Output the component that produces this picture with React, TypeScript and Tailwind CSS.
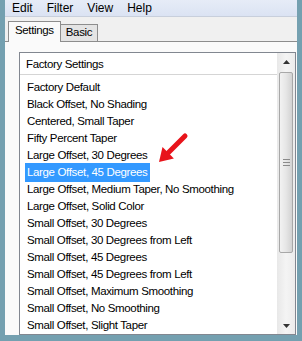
import React from "react";

const items = [
  "Factory Default",
  "Black Offset, No Shading",
  "Centered, Small Taper",
  "Fifty Percent Taper",
  "Large Offset, 30 Degrees",
  "Large Offset, 45 Degrees",
  "Large Offset, Medium Taper, No Smoothing",
  "Large Offset, Solid Color",
  "Small Offset, 30 Degrees",
  "Small Offset, 30 Degrees from Left",
  "Small Offset, 45 Degrees",
  "Small Offset, 45 Degrees from Left",
  "Small Offset, Maximum Smoothing",
  "Small Offset, No Smoothing",
  "Small Offset, Slight Taper",
];

const ScrollBar = () => (
  <div className="flex w-[18px] shrink-0 flex-col bg-gradient-to-r from-[#e8e8e8] via-[#f4f4f4] to-[#ececec]">
    <div className="flex h-[17px] items-center justify-center">
      <svg width="7" height="4" viewBox="0 0 7 4">
        <polygon points="3.5,0 7,4 0,4" fill="#333" />
      </svg>
    </div>
    <div className="mx-[2px] mt-[2px] flex h-[181px] items-center justify-center rounded-[2px] border border-[#a8a8a8] bg-gradient-to-r from-[#f2f2f2] via-[#e6e6e6] to-[#d2d2d2]">
      <div className="flex flex-col gap-[2px]">
        <div className="h-px w-[7px] bg-[#8a8a8a]" />
        <div className="h-px w-[7px] bg-[#8a8a8a]" />
        <div className="h-px w-[7px] bg-[#8a8a8a]" />
      </div>
    </div>
    <div className="flex-1" />
    <div className="flex h-[17px] items-center justify-center">
      <svg width="7" height="4" viewBox="0 0 7 4">
        <polygon points="0,0 7,0 3.5,4" fill="#333" />
      </svg>
    </div>
  </div>
);

export default function App() {
  return (
    <div
      className="relative flex h-[341px] w-[302px] flex-col border-x-[5px] border-b-[6px] border-[#74a0b0] text-[11.5px] tracking-[-0.35px] text-black"
      style={{ fontFamily: '"Liberation Sans", Arial, sans-serif' }}
    >
      {/* menu bar */}
      <div className="flex h-[17px] items-center gap-[14px] border-b border-[#c8cfdc] bg-gradient-to-b from-[#e6ecf7] to-[#dbe3f3] pl-[7px] text-[12px] leading-none tracking-normal">
        <span>Edit</span>
        <span>Filter</span>
        <span>View</span>
        <span>Help</span>
      </div>

      {/* tabs */}
      <div className="flex flex-1 flex-col bg-[#f0f0f0]">
        <div className="flex h-[24px] items-end pl-[3px]">
          <div className="relative z-10 -mb-px flex h-[21px] items-center border border-b-0 border-[#8d8d8d] bg-[#fafafa] px-[6px] pb-[2px]">
            Settings
          </div>
          <div className="flex h-[17px] items-center border border-l-0 border-b-0 border-[#8d8d8d] bg-[#e4e4e4] px-[5px]">
            Basic
          </div>
        </div>

        <div className="flex flex-1 flex-col border-t border-[#8d8d8d] bg-[#fafafa] pl-[14px] pr-[1px] pt-[10px]">
          {/* list box */}
          <div className="flex h-[283px] border border-[#828790] bg-white">
            <div className="flex flex-1 flex-col overflow-hidden">
              <div className="flex h-[22px] shrink-0 items-center border-b border-[#d5d5d5] pl-[6px] pt-[3px]">
                Factory Settings
              </div>
              <div className="flex flex-col pt-[4px]">
                {items.map((item) => (
                  <div key={item} className="flex h-[17px] shrink-0 items-center pl-[5px]">
                    <span
                      className={
                        item === "Large Offset, 45 Degrees"
                          ? "bg-[#3399ff] px-[2px] py-[1px] text-white"
                          : "px-[2px] py-[1px]"
                      }
                    >
                      {item}
                    </span>
                  </div>
                ))}
              </div>
            </div>
            <ScrollBar />
          </div>
        </div>
      </div>

      {/* red arrow annotation */}
      <svg className="absolute left-[148px] top-[129px]" width="40" height="40" viewBox="0 0 40 40">
        <line x1="15" y1="24" x2="32" y2="7" stroke="#e8141b" strokeWidth="5" strokeLinecap="round" />
        <polygon points="6,33 9.5,18.1 20.9,29.5" fill="#e8141b" />
      </svg>
    </div>
  );
}
